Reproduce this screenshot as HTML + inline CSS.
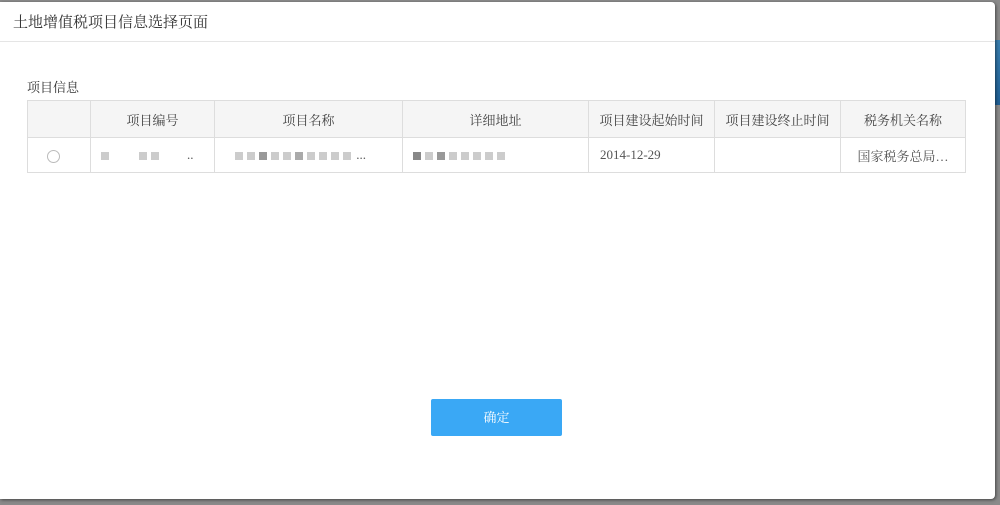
<!DOCTYPE html>
<html><head><meta charset="utf-8"><style>
*{margin:0;padding:0;box-sizing:border-box}
body{width:1000px;height:505px;overflow:hidden;background:#8a8a8a;font-family:"Liberation Serif","Noto Serif CJK SC","Noto Sans CJK SC",serif;position:relative}
.strip{position:absolute;left:990px;top:40px;width:10px;height:65px;background:linear-gradient(#3a7fb0,#1f5f95)}
.dlg{position:absolute;left:0;top:2px;width:995px;height:497px;background:#fff;border-radius:0 4px 4px 0;box-shadow:1px 1px 3px rgba(0,0,0,.5)}
.title{position:absolute;left:13px;top:9px;font-size:15px;color:#333}
.hr{position:absolute;left:0;right:0;top:39px;border-top:1px solid #e5e5e5}
.sub{position:absolute;left:27px;top:75px;font-size:13px;color:#333}
table{position:absolute;left:27px;top:98px;border-collapse:collapse;font-size:13px;color:#555}
td,th{border:1px solid #ddd;text-align:center;font-weight:normal;padding:0}
th{background:#f5f5f5;height:37px;color:#444}
td{height:35px}
.r{display:inline-block;width:13px;height:13px;border:1px solid #bbb;border-radius:50%;vertical-align:middle}
.b{display:inline-block;width:8px;height:8px;background:#ccc;margin:0 2px;vertical-align:middle}
.btn{position:absolute;left:431px;top:397px;width:131px;height:37px;background:#3aa8f5;color:#fff;font-size:13px;text-align:center;line-height:37px;border-radius:2px}
</style></head><body>
<div class="strip"></div>
<div class="dlg">
<div class="title">土地增值税项目信息选择页面</div>
<div class="hr"></div>
<div class="sub">项目信息</div>
<table>
<tr><th style="width:63px"></th><th style="width:124px">项目编号</th><th style="width:188px">项目名称</th><th style="width:186px">详细地址</th><th style="width:126px">项目建设起始时间</th><th style="width:126px">项目建设终止时间</th><th style="width:125px">税务机关名称</th></tr>
<tr><td style="text-align:left;padding-left:19px"><span class="r"></span></td>
<td style="text-align:left;padding-left:8px"><span class="b"></span>&nbsp;&nbsp;&nbsp;&nbsp;&nbsp;&nbsp;&nbsp;&nbsp;<span class="b"></span><span class="b"></span>&nbsp;&nbsp;&nbsp;&nbsp;&nbsp;&nbsp;&nbsp;&nbsp;..</td>
<td style="text-align:left;padding-left:18px"><span class="b"></span><span class="b"></span><span class="b" style="background:#999"></span><span class="b"></span><span class="b"></span><span class="b" style="background:#aaa"></span><span class="b"></span><span class="b"></span><span class="b"></span><span class="b"></span> ...</td>
<td style="text-align:left;padding-left:8px"><span class="b" style="background:#888"></span><span class="b"></span><span class="b" style="background:#999"></span><span class="b"></span><span class="b"></span><span class="b"></span><span class="b"></span><span class="b"></span></td>
<td style="text-align:left;padding-left:11px">2014-12-29</td><td></td><td>国家税务总局…</td></tr>
</table>
<div class="btn">确定</div>
</div>
</body></html>
